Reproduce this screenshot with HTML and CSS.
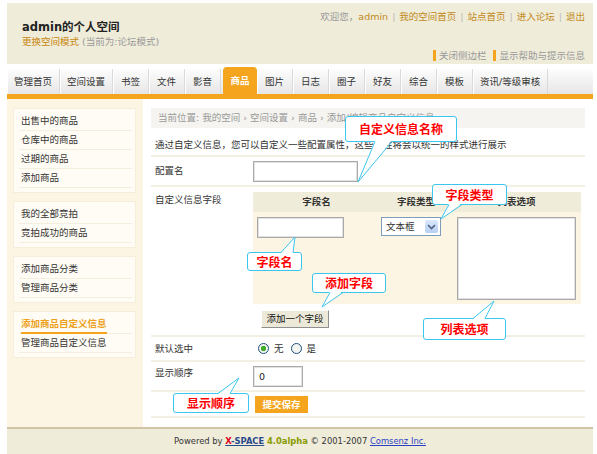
FILE: index.html
```html
<!DOCTYPE html>
<html lang="zh-CN">
<head>
  <meta charset="UTF-8" />
  <title>admin的个人空间</title>
  <link rel="stylesheet" href="styles.css">
</head>
<body>

<div class="wrap">
  <div class="header">
    <div class="header-left">
      <h1 class="space-title">admin的个人空间</h1>
      <div class="space-mode"><a href="#">更换空间模式</a> <span>(当前为:论坛模式)</span></div>
    </div>
    <div class="header-right">
      <div class="top-links">
        <span class="gray">欢迎您，</span><a href="#">admin</a><i>|</i><a href="#">我的空间首页</a><i>|</i><a href="#">站点首页</a><i>|</i><a href="#">进入论坛</a><i>|</i><a href="#">退出</a>
      </div>
      <div class="side-links">
        <a href="#">关闭侧边栏</a><a href="#">显示帮助与提示信息</a>
      </div>
    </div>
  </div>

  <div class="nav">
    <a href="#">管理首页</a>
    <a href="#">空间设置</a>
    <a href="#">书签</a>
    <a href="#">文件</a>
    <a href="#">影音</a>
    <a href="#" class="active">商品</a>
    <a href="#">图片</a>
    <a href="#">日志</a>
    <a href="#">圈子</a>
    <a href="#">好友</a>
    <a href="#">综合</a>
    <a href="#">模板</a>
    <a href="#">资讯/等级审核</a>
  </div>

  <div class="main">
    <div class="sidebar">
      <div class="side-box">
        <a href="#">出售中的商品</a>
        <a href="#">仓库中的商品</a>
        <a href="#">过期的商品</a>
        <a href="#">添加商品</a>
      </div>
      <div class="side-box">
        <a href="#">我的全部竞拍</a>
        <a href="#">竞拍成功的商品</a>
      </div>
      <div class="side-box">
        <a href="#">添加商品分类</a>
        <a href="#">管理商品分类</a>
      </div>
      <div class="side-box">
        <a href="#" class="on"><span>添加商品自定义信息</span></a>
        <a href="#">管理商品自定义信息</a>
      </div>
    </div>

    <div class="content">
      <div class="crumb">当前位置: 我的空间 › 空间设置 › 商品 › 添加/编辑商品自定义信息</div>

      <div class="row row-desc">通过自定义信息，您可以自定义一些配置属性，这些属性将会以统一的样式进行展示</div>

      <div class="row row-name">
        <div class="label">配置名</div>
        <div class="field"><input type="text" class="txt txt-name"></div>
      </div>

      <div class="row row-fields">
        <div class="label">自定义信息字段</div>
        <div class="field">
          <div class="field-table">
            <div class="th">字段名</div>
            <div class="th">字段类型</div>
            <div class="th">列表选项</div>
            <div class="td td-name"><input type="text" class="txt txt-field"></div>
            <div class="td td-type">
              <div class="select"><span>文本框</span><b><svg width="9" height="6" viewBox="0 0 9 6"><path d="M1 1 L4.5 4.5 L8 1" fill="none" stroke="#4d6185" stroke-width="1.6"/></svg></b></div>
            </div>
            <div class="td td-opts"><textarea class="opts"></textarea></div>
          </div>
          <button type="button" class="btn-add">添加一个字段</button>
        </div>
      </div>

      <div class="row row-radio">
        <div class="label">默认选中</div>
        <div class="field radios">
          <label><input type="radio" name="def" checked> 无</label>
          <label><input type="radio" name="def"> 是</label>
        </div>
      </div>

      <div class="row row-order">
        <div class="label">显示顺序</div>
        <div class="field"><input type="text" class="txt txt-order" value="0"></div>
      </div>

      <div class="row row-submit">
        <div class="label"></div>
        <div class="field"><button type="submit" class="btn-submit">提交保存</button></div>
      </div>
    </div>
  </div>

  <div class="footer">
    Powered by <a href="#" class="xs"><b><em>X</em>-SPACE</b></a> <b class="ver">4.0alpha</b> &copy; 2001-2007 <a href="#" class="cz">Comsenz Inc.</a>
  </div>
</div>

<!-- annotation callouts -->
<div class="tip tip-name">自定义信息名称</div>
<div class="tip tip-type">字段类型</div>
<div class="tip tip-field">字段名</div>
<div class="tip tip-add">添加字段</div>
<div class="tip tip-opts">列表选项</div>
<div class="tip tip-order">显示顺序</div>

<svg class="tails" width="597" height="454" viewBox="0 0 597 454">
  <g fill="#fff" stroke="none">
    <polygon points="375,140 358,182 392,140"/>
    <polygon points="449,203 441,219 462,203"/>
    <polygon points="281,253 295,237 293,253"/>
    <polygon points="330,291 322,307 343,291"/>
    <polygon points="473,319 494,301 485,319"/>
    <polygon points="218,394 239,378 230,394"/>
  </g>
  <g fill="none" stroke="#3cc6ef" stroke-width="1">
    <polyline points="375,141.5 358,182 392,141.5"/>
    <polyline points="449,204.5 441,219 462,204.5"/>
    <polyline points="281,252.5 295,237 293,252.5"/>
    <polyline points="330,292.5 322,307 343,292.5"/>
    <polyline points="473,318.5 494,301 485,318.5"/>
    <polyline points="218,393.5 239,378 230,393.5"/>
  </g>
</svg>

</body>
</html>
```

FILE: styles.css
```css
* { box-sizing: border-box; }

body {
  margin: 0;
  position: relative;
  width: 597px;
  height: 454px;
  overflow: hidden;
  background: #fff;
  font-family: "DejaVu Sans", "Noto Sans CJK SC", sans-serif;
  font-size: 9.5px;
  line-height: 14px;
  color: #333;
}

a { text-decoration: none; }

.wrap {
  margin: 3px 0 0 7px;
  width: 586px;
}

/* header */
.header {
  height: 61px;
  background: #efecd9;
  display: flex;
  justify-content: space-between;
  padding: 0 8px 0 15px;
}

.space-title {
  margin: 16px 0 0;
  font-size: 11.5px;
  line-height: 16px;
  color: #222;
}

.space-mode a { color: #c8860c; }
.space-mode span { color: #999; }

.header-right { text-align: right; }

.top-links {
  margin-top: 7px;
  color: #999;
}

.top-links a { color: #c28a1d; }
.top-links i {
  font-style: normal;
  color: #bbb;
  margin: 0 4px;
}

.side-links { margin-top: 25px; }

.side-links a {
  color: #999;
  border-left: 3px solid #f5a41e;
  padding-left: 3px;
  margin-left: 7px;
}

/* nav tabs */
.nav {
  margin-top: 5px;
  height: 30px;
  display: flex;
  background: linear-gradient(#fdfdfd, #e6e6e6);
  border-bottom: 5px solid #f5a41e;
}

.nav a {
  height: 25px;
  min-width: 36px;
  line-height: 25px;
  padding: 0 7px;
  text-align: center;
  color: #333;
  border-right: 1px solid #d9d9d9;
  box-shadow: inset 1px 0 0 #fff;
}

.nav a.active {
  min-width: 34px;
  height: 27px;
  margin: -2px 0 0 2px;
  line-height: 28px;
  background: #f5a41e;
  color: #fff;
  font-weight: bold;
  border: none;
  border-radius: 4px 4px 0 0;
  box-shadow: none;
}

/* main */
.main {
  display: flex;
  height: 328px;
}

.sidebar {
  width: 136px;
  background: #fdf5e4;
  padding-top: 9px;
}

.side-box {
  margin: 0 7px 8px 6px;
  background: #fffcf5;
  border: 1px solid #f6eedb;
  padding: 3px 3px 4px 5px;
}

.side-box a {
  display: block;
  height: 19px;
  line-height: 18px;
  padding-left: 2px;
  color: #333;
  border-bottom: 1px solid #f4eedf;
}

.side-box a.on {
  color: #eda01c;
  font-weight: bold;
}

.side-box a.on span {
  display: inline-block;
  line-height: 16px;
  border-bottom: 2px solid #f5a41e;
}

.content {
  flex: 1;
  padding: 9px 8px;
  background: #fff;
}

.crumb {
  height: 20px;
  line-height: 20px;
  padding-left: 7px;
  background: #f5f4f0;
  color: #999;
}

.row {
  display: flex;
  border-bottom: 2px solid #f2efe3;
}

.row .label {
  width: 102px;
  padding-left: 4px;
}

.row-desc {
  height: 29px;
  padding: 10px 4px 0;
}

.row-name { height: 30px; align-items: center; }
.row-fields { height: 150px; }
.row-fields .label { padding-top: 6px; }
.row-radio { height: 25px; align-items: center; }
.row-order { height: 30px; }
.row-order .label { padding-top: 4px; }
.row-order .field { padding-top: 4px; }
.row-submit { height: 26px; }
.row-submit .field { padding: 4px 0 0 2px; }

.txt {
  border: 1px solid #a9a9a9;
  box-shadow: inset 0 0 0 1px #e2e2e2;
  background: #fff;
  font: inherit;
  padding: 0 5px;
}

.txt-name { width: 105px; height: 21px; }
.txt-field { width: 87px; height: 21px; }
.txt-order { width: 50px; height: 21px; color: #222; }

.row-fields .field { padding-top: 5px; }

.field-table {
  display: grid;
  grid-template-columns: 127px 72px 129px;
  grid-template-rows: 20px 92px;
  background: #fdf5e4;
}

.th {
  background: #efecd9;
  text-align: center;
  line-height: 20px;
  font-weight: bold;
}

.td { padding-top: 5px; }
.td-name { padding-left: 4px; }
.td-type { padding-left: 1px; }
.td-opts { padding-left: 5px; }

.select {
  width: 60px;
  height: 19px;
  border: 1px solid #7f9db9;
  background: #fff;
  display: flex;
  align-items: center;
  justify-content: space-between;
  padding: 0 2px 0 4px;
}

.select b {
  width: 13px;
  height: 13px;
  border-radius: 2px;
  background: linear-gradient(#dbe8fb, #b7cff3);
  display: flex;
  align-items: center;
  justify-content: center;
}

.opts {
  display: block;
  width: 119px;
  height: 83px;
  border: 1px solid #a9a9a9;
  box-shadow: inset 0 0 0 1px #e2e2e2;
  resize: none;
}

.btn-add {
  margin: 6px 0 0 8px;
  width: 68px;
  height: 18px;
  padding: 0;
  font: inherit;
  color: #111;
  background: #ece9d8;
  border: 1px solid;
  border-color: #fff #8f8f8f #8f8f8f #fff;
}

.radios {
  display: flex;
  align-items: center;
  padding-left: 5px;
}

.radios label {
  display: flex;
  align-items: center;
  margin-right: 7px;
}

.radios input {
  appearance: none;
  width: 11px;
  height: 11px;
  margin: 0 5px 0 0;
  border: 1px solid #1c5180;
  border-radius: 50%;
  background: #f4f4f0;
}

.radios input:checked {
  background: radial-gradient(circle, #3fae2a 2.5px, #f4f4f0 3px);
}

.btn-submit {
  width: 53px;
  height: 17px;
  padding: 0;
  border: none;
  background: #f5a41e;
  color: #fff;
  font: inherit;
  font-weight: bold;
}

/* footer */
.footer {
  height: 27px;
  border-top: 2px solid #cfc5a6;
  background: #efecd9;
  text-align: center;
  font-family: "DejaVu Sans", sans-serif;
  font-size: 8.4px;
  line-height: 25px;
  color: #333;
}

.footer .xs {
  color: #2b4a8c;
  text-decoration: underline;
}
.footer .xs em { font-style: normal; color: #e0001b; }
.footer .ver { color: #8a9a00; }
.footer .cz {
  color: #2b3fc4;
  text-decoration: underline;
}

/* callouts */
.tip {
  position: absolute;
  background: #fff;
  border: 1px solid #3cc6ef;
  border-radius: 3px;
  color: #f00;
  font-family: "Noto Sans CJK SC", sans-serif;
  font-weight: bold;
  font-size: 12px;
  display: flex;
  align-items: center;
  justify-content: center;
  z-index: 2;
}

.tip-name { left: 345px; top: 116px; width: 112px; height: 26px; }
.tip-type { left: 432px; top: 184px; width: 75px; height: 21px; }
.tip-field { left: 247px; top: 252px; width: 55px; height: 19px; }
.tip-add { left: 312px; top: 273px; width: 74px; height: 20px; }
.tip-opts { left: 423px; top: 318px; width: 83px; height: 22px; }
.tip-order { left: 173px; top: 393px; width: 76px; height: 20px; }

.tails {
  position: absolute;
  left: 0;
  top: 0;
  z-index: 3;
  pointer-events: none;
}
```
